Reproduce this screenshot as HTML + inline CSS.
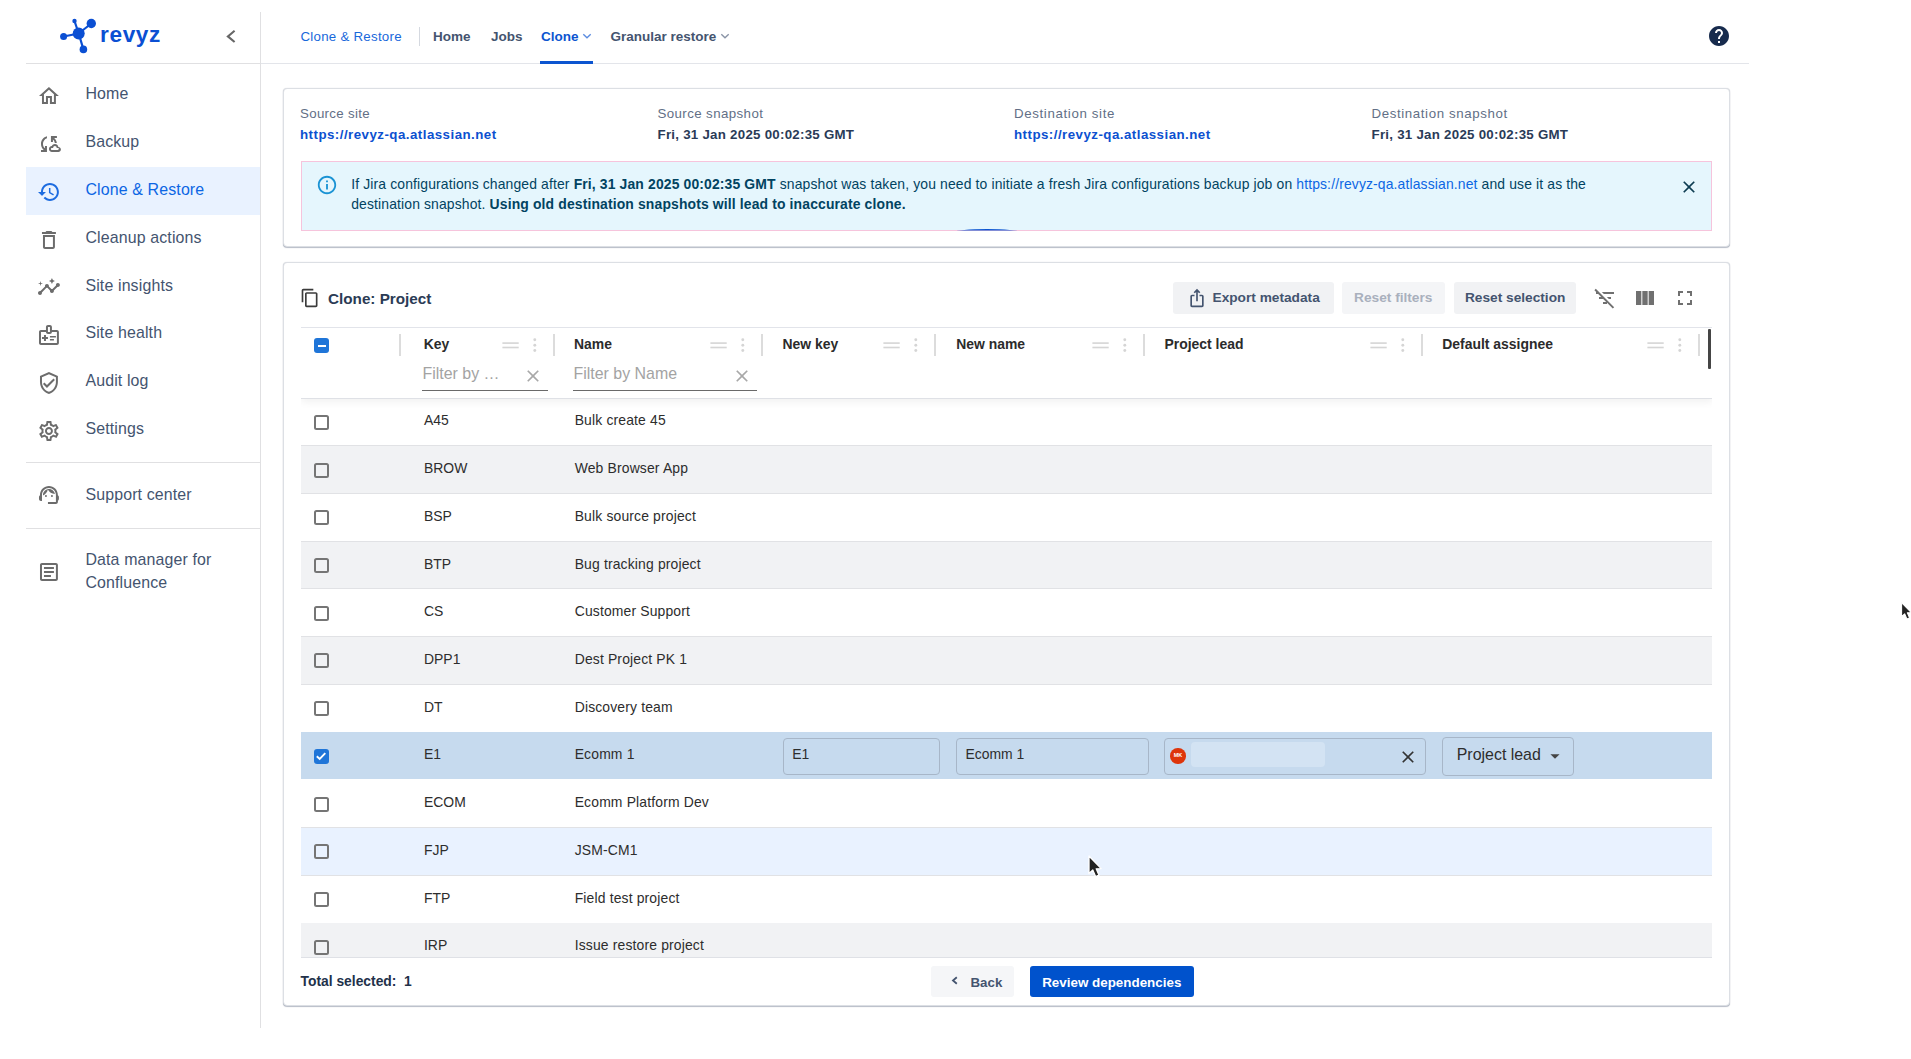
<!DOCTYPE html>
<html lang="en">
<head>
<meta charset="utf-8">
<title>Clone: Project</title>
<style>
*{box-sizing:border-box;margin:0;padding:0}
html,body{width:1911px;height:1059px;overflow:hidden;background:#fff}
body{font-family:"Liberation Sans",sans-serif;position:relative;color:#172b4d;-webkit-font-smoothing:antialiased}
svg{display:block}
a{text-decoration:none;color:inherit}
.abs{position:absolute}
/* ---------- sidebar ---------- */
#side{position:absolute;left:26px;top:12px;width:235px;height:1016px;border-right:1px solid #e0e0e2}
#side .hd{position:absolute;left:0;top:0;width:234px;height:52px;border-bottom:1px solid #e0e0e2}
#logo{position:absolute;left:33px;top:6px}
#logotxt{position:absolute;left:74px;top:9.2px;font-weight:bold;font-size:22.6px;line-height:28px;color:#0b4fd3;letter-spacing:.65px}
#collapse{position:absolute;left:195px;top:13px}
.nav{position:absolute;left:0;width:234px;height:47.77px;color:#44546f;font-size:15.93px;letter-spacing:.14px}
.nav.act{background:#e9f2ff;color:#0c66e4}
.nav svg{position:absolute;left:11px;top:12.5px;width:23.9px;height:23.9px;fill:#6c6c6c}
.nav.act svg{fill:#1d6ce0}
.nav span{position:absolute;left:59.4px;top:12.6px;line-height:20px;white-space:nowrap}
.sdiv{position:absolute;left:0;width:234px;height:1px;background:#e0e0e2}
/* ---------- top nav ---------- */
#top{position:absolute;left:261px;top:12px;width:1488px;height:52px;border-bottom:1px solid #e3e5ea}
#top span{position:absolute;white-space:nowrap;font-size:13.5px;line-height:16px;top:16.7px;color:#44546f;font-weight:bold}
#top .crumb{font-weight:normal;color:#1868db;font-size:13.3px;letter-spacing:.25px}
#top .on{color:#0c55d0}
/* ---------- cards ---------- */
.card{position:absolute;left:283px;width:1447px;background:#fff;border:1px solid #dcdfe4;border-radius:4px;box-shadow:0 1px 1px rgba(9,30,66,.28),0 0 1px rgba(9,30,66,.2)}
.lbl{position:absolute;top:17.1px;font-size:13.3px;line-height:16px;color:#626f86;white-space:nowrap}
.val{position:absolute;top:38.3px;font-size:13.3px;line-height:16px;font-weight:bold;color:#2a3b57;white-space:nowrap}
.val.lk{color:#0c50d0}
#alert{position:absolute;left:16.5px;top:72px;width:1411px;height:70px;background:#e5f6fd;border:1px solid #f6c4dc;color:#014361;font-size:13.93px;letter-spacing:.135px;line-height:19.9px}
#alert p{position:absolute;left:49.7px;top:12.6px;width:1275px}
#alert a{color:#0c66e4}
/* ---------- grid ---------- */
#title{position:absolute;left:44px;top:26px;font-weight:bold;font-size:15.25px;line-height:20px;color:#2b3b55;white-space:nowrap}
.btn{position:absolute;top:19.2px;height:32px;border-radius:3px;background:#f1f2f4;color:#44546f;font-weight:bold;font-size:13.7px;line-height:32px;white-space:nowrap;text-align:center}
.btn.dis{color:#a9b0bd;background:#f4f5f7}
#grid{position:absolute;left:16.5px;top:64px;width:1411px;height:631.3px;overflow:hidden;border-top:1px solid #e2e4ea;border-bottom:1px solid #dfe1e6}
#ghead{position:absolute;left:0;top:0;width:1412px;height:71px;border-bottom:1px solid #dfe1e6;box-shadow:0 3px 8px rgba(0,0,0,.06);z-index:2;background:#fff}
.hc{position:absolute;top:7.9px;font-weight:bold;font-size:13.93px;line-height:16px;color:#2b2b2b;white-space:nowrap}
.sep{position:absolute;top:6.2px;width:2px;height:22px;background:#dcdcdc}
.eq{position:absolute;top:14.8px;width:16.5px;height:5.8px;border-top:1.5px solid #d2d2d2;border-bottom:1.5px solid #d2d2d2}
.dots{position:absolute;top:9.1px;width:2.6px;height:15.9px;background:radial-gradient(circle,#cfcfcf 1.25px,transparent 1.5px) 0 0/2.6px 5.3px repeat-y}
.flt{position:absolute;top:35.2px;height:27.5px;border-bottom:1px solid #6a6a6a;font-size:15.93px;line-height:20px;color:#a3a3a3;white-space:nowrap;overflow:hidden}
.flt i{font-style:normal;position:absolute;left:1px;top:.8px}
.flt svg{position:absolute;right:5px;top:3px;width:20px;height:20px;fill:#a8a8a8}
.row{position:absolute;left:0;width:1412px;height:47.77px;border-bottom:1px solid #e1e2e5;font-size:13.93px;color:#2d2d2d}
.row.ev{background:#f1f2f4}
.row.sel{background:#c6daee;border-bottom-color:#c6daee}
.row.hov{background:#e9f2ff}
.row b{position:absolute;left:13px;top:16.4px;width:15px;height:15px;border:2px solid #757575;border-radius:2.5px;background:#fff}
.row.ev b{background:#f1f2f4}.row.hov b{background:#e9f2ff}
.row .k{position:absolute;left:123.5px;top:13px;line-height:18px;white-space:nowrap}
.row .n{position:absolute;left:274.2px;top:13px;line-height:18px;white-space:nowrap;letter-spacing:.15px}
.inp{position:absolute;top:6.2px;height:36.3px;border:1px solid #a7b6c8;border-radius:4px;font-size:13.93px;line-height:18px;color:#2d2d2d;padding:6px 0 0 8.5px;white-space:nowrap}
#foot{position:absolute;left:16.5px;top:710px;font-weight:bold;font-size:13.85px;line-height:16px;color:#22314a;white-space:pre}
</style>
</head>
<body>
<div id="side">
 <div class="hd">
  <svg id="logo" class="abs" style="left:30px;top:2px" width="44" height="44" viewBox="0 0 44 44">
   <g stroke="#0b4fd3" stroke-width="2.2" stroke-linecap="round">
    <line x1="22.7" y1="19.5" x2="35.3" y2="9.5"/><line x1="22.7" y1="19.5" x2="7.6" y2="22.5"/>
    <line x1="22.7" y1="19.5" x2="27.4" y2="35.4"/><line x1="22.7" y1="19.5" x2="18.5" y2="7"/>
   </g>
   <g fill="#0b4fd3"><circle cx="22.7" cy="19.5" r="6"/><circle cx="35.3" cy="9.5" r="4.7"/><circle cx="7.6" cy="22.5" r="3.5"/><circle cx="27.4" cy="35.4" r="3.8"/><circle cx="18.5" cy="7" r="2.2"/></g>
  </svg>
  <div id="logotxt">revyz</div>
  <svg class="abs" style="left:198px;top:16px" width="16" height="18" viewBox="0 0 16 18"><path d="M10.6 2.8 L3.9 8.4 L10.6 14" fill="none" stroke="#666" stroke-width="2.1"/></svg>
 </div>
 <div class="nav" style="top:59.90px"><svg viewBox="0 0 24 24"><path d="M12 5.69l5 4.5V18h-2v-6H9v6H7v-7.81l5-4.5M12 3L2 12h3v8h6v-6h2v6h6v-8h3L12 3z"/></svg><span>Home</span></div>
 <div class="nav" style="top:107.67px"><svg viewBox="0 0 24 24"><path d="M21.5 14.98c-.02 0-.03 0-.05.01C21.2 13.3 19.76 12 18 12c-1.4 0-2.6.83-3.16 2.02C13.26 14.1 12 15.4 12 17c0 1.66 1.34 3 3 3l6.5-.02c1.38 0 2.5-1.12 2.5-2.5s-1.12-2.5-2.5-2.5zm.01 3.02L15 18c-.55 0-1-.45-1-1s.45-1 1-1h1.25v-.25c0-.97.78-1.75 1.75-1.75s1.750.78 1.750 1.750V16h1.760c.28 0 .5.22.5.5-.01.27-.23.5-.5.5zM10 4.260v2.090C7.670 7.180 6 9.390 6 12c0 1.770.78 3.340 2 4.440V14h2v6H4v-2h2.730C5.060 16.540 4 14.400 4 12c0-3.730 2.550-6.850 6-7.740zM20 6h-2.730c1.430 1.260 2.410 3.010 2.660 5h-2.020c-.23-1.360-.93-2.550-1.910-3.440V10h-2V4h6v2z"/></svg><span>Backup</span></div>
 <div class="nav act" style="top:155.44px"><svg viewBox="0 0 24 24"><path d="M13 3c-4.970 0-9 4.030-9 9H1l3.890 3.890.07.14L9 12H6c0-3.870 3.130-7 7-7s7 3.130 7 7-3.130 7-7 7c-1.930 0-3.680-.79-4.940-2.060l-1.420 1.420C8.270 19.990 10.510 21 13 21c4.970 0 9-4.030 9-9s-4.030-9-9-9zm-1 5v5l4.280 2.540.72-1.210-3.500-2.080V8H12z"/></svg><span>Clone &amp; Restore</span></div>
 <div class="nav" style="top:203.21px"><svg viewBox="0 0 24 24"><path d="M6 19c0 1.100.9 2 2 2h8c1.100 0 2-.9 2-2V7H6v12zM8 9h8v10H8V9zm7.500-5l-1-1h-5l-1 1H5v2h14V4z"/></svg><span>Cleanup actions</span></div>
 <div class="nav" style="top:250.98px"><svg viewBox="0 0 24 24"><path d="M21 8c-1.450 0-2.260 1.440-1.930 2.510l-3.550 3.560c-.3-.09-.74-.09-1.040 0l-2.550-2.550C12.270 10.450 11.460 9 10 9c-1.450 0-2.270 1.440-1.930 2.520l-4.560 4.550C2.440 15.740 1 16.550 1 18c0 1.100.9 2 2 2 1.450 0 2.260-1.440 1.930-2.510l4.550-4.560c.3.09.74.09 1.040 0l2.550 2.550C12.730 16.550 13.540 18 15 18c1.450 0 2.270-1.440 1.930-2.520l3.560-3.550c1.070.33 2.510-.48 2.510-1.930 0-1.100-.9-2-2-2z"/><path d="M15 9l.94-2.070L18 6l-2.060-.93L15 3l-.92 2.070L12 6l2.080.93zM3.500 11L4 9l2-.5L4 8l-.5-2L3 8l-2 .5L3 9z"/></svg><span>Site insights</span></div>
 <div class="nav" style="top:298.75px"><svg viewBox="0 0 24 24"><path d="M20 7h-5V4c0-1.100-.9-2-2-2h-2c-1.100 0-2 .9-2 2v3H4c-1.100 0-2 .9-2 2v11c0 1.100.9 2 2 2h16c1.100 0 2-.9 2-2V9c0-1.100-.9-2-2-2zm-9-3h2v5h-2V4zm9 16H4V9h5c0 1.100.9 2 2 2h2c1.100 0 2-.9 2-2h5v11zm-9-4H9v2H7v-2H5v-2h2v-2h2v2h2v2zm2-1.500V13h6v1.500h-6zm0 3V16h4v1.500h-4z"/></svg><span>Site health</span></div>
 <div class="nav" style="top:346.52px"><svg viewBox="0 0 24 24"><path d="M12 1L3 5v6c0 5.550 3.840 10.740 9 12 5.160-1.260 9-6.450 9-12V5l-9-4zm7 10c0 4.520-2.980 8.690-7 9.930-4.020-1.240-7-5.410-7-9.930V6.300l7-3.110 7 3.110V11zm-11.590.59L6 13l4 4 8-8-1.410-1.420L10 14.170z"/></svg><span>Audit log</span></div>
 <div class="nav" style="top:394.29px"><svg viewBox="0 0 24 24"><path d="M19.430 12.980c.04-.32.07-.64.07-.98 0-.34-.03-.66-.07-.98l2.110-1.650c.19-.15.24-.42.12-.64l-2-3.460c-.09-.16-.26-.25-.44-.25-.06 0-.12.01-.17.03l-2.490 1c-.52-.4-1.080-.73-1.690-.98l-.38-2.650C14.460 2.180 14.250 2 14 2h-4c-.25 0-.46.18-.49.42l-.38 2.650c-.61.25-1.170.59-1.690.98l-2.490-1c-.06-.02-.12-.03-.18-.03-.17 0-.34.09-.43.25l-2 3.460c-.13.22-.07.49.12.64l2.110 1.650c-.04.32-.07.65-.07.98 0 .33.03.66.07.98l-2.110 1.650c-.19.15-.24.42-.12.64l2 3.460c.09.16.26.25.44.25.06 0 .12-.01.17-.03l2.490-1c.52.4 1.080.73 1.690.98l.38 2.650c.03.24.24.42.49.42h4c.25 0 .46-.18.49-.42l.38-2.650c.61-.25 1.170-.59 1.690-.98l2.490 1c.06.02.12.03.18.03.17 0 .34-.09.43-.25l2-3.460c.12-.22.07-.49-.12-.64l-2.110-1.650zm-1.980-1.710c.04.31.05.52.05.73 0 .21-.02.43-.05.73l-.14 1.130.89.7 1.080.84-.7 1.210-1.270-.51-1.040-.42-.9.68c-.43.32-.84.56-1.250.73l-1.060.43-.16 1.130-.2 1.350h-1.400l-.19-1.350-.16-1.130-1.060-.43c-.43-.18-.83-.41-1.230-.71l-.91-.7-1.060.43-1.270.51-.7-1.210 1.080-.84.89-.7-.14-1.130c-.03-.31-.05-.54-.05-.74s.02-.43.05-.73l.14-1.130-.89-.7-1.080-.84.7-1.210 1.270.51 1.040.42.9-.68c.43-.32.84-.56 1.250-.73l1.060-.43.16-1.130.2-1.350h1.390l.19 1.350.16 1.130 1.060.43c.43.18.83.41 1.230.71l.91.7 1.060-.43 1.270-.51.7 1.210-1.070.85-.89.7.14 1.130zM12 8c-2.210 0-4 1.790-4 4s1.790 4 4 4 4-1.790 4-4-1.790-4-4-4zm0 6c-1.100 0-2-.9-2-2s.9-2 2-2 2 .9 2 2-.9 2-2 2z"/></svg><span>Settings</span></div>
 <div class="sdiv" style="top:450px"></div>
 <div class="nav" style="top:459.6px"><svg viewBox="0 0 24 24" style="top:11.700px"><path d="M21 12.220C21 6.730 16.740 3 12 3c-4.690 0-9 3.650-9 9.280-.6.340-1 .98-1 1.720v2c0 1.100.9 2 2 2h1v-6.100c0-3.870 3.130-7 7-7s7 3.130 7 7V19h-8v2h8c1.100 0 2-.9 2-2v-1.220c.59-.31 1-.92 1-1.640v-2.300c0-.7-.41-1.310-1-1.620z"/><circle cx="9" cy="13" r="1"/><circle cx="15" cy="13" r="1"/><path d="M18 11.030C17.520 8.180 15.040 6 12.050 6c-3.030 0-6.290 2.510-6.030 6.450 2.470-1.010 4.330-3.210 4.860-5.890 1.310 2.630 4 4.440 7.120 4.470z"/></svg><span style="top:13.600px">Support center</span></div>
 <div class="sdiv" style="top:516px"></div>
 <div class="nav" style="top:524px;height:71.6px"><svg viewBox="0 0 24 24" style="top:23.8px"><path d="M19 5v14H5V5h14m0-2H5c-1.100 0-2 .9-2 2v14c0 1.100.9 2 2 2h14c1.100 0 2-.9 2-2V5c0-1.100-.9-2-2-2z"/><path d="M14 17H7v-2h7v2zm3-4H7v-2h10v2zm0-4H7V7h10v2z"/></svg><span style="top:11.7px;line-height:23.5px;white-space:normal;width:160px">Data manager for Confluence</span></div>
</div>

<div id="top">
 <span class="crumb" style="left:39.5px">Clone &amp; Restore</span>
 <i class="abs" style="left:157.5px;top:15px;width:1px;height:19px;background:#d5d9e0"></i>
 <span style="left:172px">Home</span>
 <span style="left:230px">Jobs</span>
 <span class="on" style="left:280px">Clone</span>
 <svg class="abs" style="left:321px;top:20px" width="10" height="8" viewBox="0 0 10 8"><path d="M1.300 2.200 L5 5.700 L8.700 2.200" fill="none" stroke="#5d8de0" stroke-width="1.400"/></svg>
 <i class="abs" style="left:278.5px;top:48.5px;width:53.500px;height:3.500px;background:#0c55d0"></i>
 <span style="left:349.5px">Granular restore</span>
 <svg class="abs" style="left:459px;top:20px" width="10" height="8" viewBox="0 0 10 8"><path d="M1.300 2.200 L5 5.700 L8.700 2.200" fill="none" stroke="#8a94a6" stroke-width="1.400"/></svg>
 <svg class="abs" style="left:1445.500px;top:12px" width="24" height="24" viewBox="0 0 24 24"><path fill="#172b4d" d="M12 2C6.480 2 2 6.480 2 12s4.480 10 10 10 10-4.480 10-10S17.520 2 12 2zm1 17h-2v-2h2v2zm2.070-7.750l-.9.920C13.450 12.900 13 13.500 13 15h-2v-.5c0-1.100.45-2.100 1.170-2.830l1.240-1.260c.37-.36.59-.86.59-1.410 0-1.100-.9-2-2-2s-2 .9-2 2H8c0-2.210 1.790-4 4-4s4 1.790 4 4c0 .88-.36 1.680-.93 2.250z"/></svg>
</div>

<div class="card" style="top:88px;height:159px">
 <div class="lbl" style="left:16px;letter-spacing:.32px">Source site</div>
 <div class="val lk" style="left:16px;letter-spacing:.47px">https://revyz-qa.atlassian.net</div>
 <div class="lbl" style="left:373.5px;letter-spacing:.4px">Source snapshot</div>
 <div class="val" style="left:373.5px;letter-spacing:.26px">Fri, 31 Jan 2025 00:02:35 GMT</div>
 <div class="lbl" style="left:730px;letter-spacing:.63px">Destination site</div>
 <div class="val lk" style="left:730px;letter-spacing:.47px">https://revyz-qa.atlassian.net</div>
 <div class="lbl" style="left:1087.5px;letter-spacing:.6px">Destination snapshot</div>
 <div class="val" style="left:1087.5px;letter-spacing:.26px">Fri, 31 Jan 2025 00:02:35 GMT</div>
 <div id="alert">
  <svg class="abs" style="left:14.700px;top:11.600px" width="22" height="22" viewBox="0 0 24 24"><path fill="#1a93d4" d="M11 7h2v2h-2zm0 4h2v6h-2zm1-9C6.480 2 2 6.480 2 12s4.480 10 10 10 10-4.480 10-10S17.520 2 12 2zm0 18c-4.410 0-8-3.590-8-8s3.590-8 8-8 8 3.590 8 8-3.590 8-8 8z"/></svg>
  <p>If Jira configurations changed after <b>Fri, 31 Jan 2025 00:02:35 GMT</b> snapshot was taken, you need to initiate a fresh Jira configurations backup job on <a>https://revyz-qa.atlassian.net</a> and use it as the destination snapshot. <b>Using old destination snapshots will lead to inaccurate clone.</b></p>
  <svg class="abs" style="left:1377px;top:14.500px" width="20" height="20" viewBox="0 0 24 24"><path fill="#0d3c52" d="M19 6.410L17.590 5 12 10.590 6.410 5 5 6.410 10.590 12 5 17.590 6.410 19 12 13.410 17.590 19 19 17.590 13.410 12z"/></svg>
  <i class="abs" style="left:653px;top:67px;width:64px;height:6px;border-radius:50%;background:#0c55d0;clip-path:inset(0 0 4.500px 0)"></i>
 </div>
</div>

<div class="card" style="top:262px;height:744px">
 <svg class="abs" style="left:15.800px;top:24.700px" width="20" height="20" viewBox="0 0 24 24"><path fill="#3b3b3b" d="M16 1H4c-1.100 0-2 .9-2 2v14h2V3h12V1zm3 4H8c-1.100 0-2 .9-2 2v14c0 1.100.9 2 2 2h11c1.100 0 2-.9 2-2V7c0-1.100-.9-2-2-2zm0 16H8V7h11v14z"/></svg>
 <div id="title">Clone: Project</div>
 <div class="btn" style="left:888.5px;width:161.2px"><svg class="abs" style="left:14.500px;top:5px" width="20" height="22" viewBox="0 0 24 24"><path fill="#44546f" d="M16 5l-1.420 1.420-1.590-1.590V16h-1.980V4.830L9.420 6.420 8 5l4-4 4 4zm4 5v11c0 1.100-.9 2-2 2H6c-1.110 0-2-.9-2-2V10c0-1.110.89-2 2-2h3v2H6v11h12V10h-3V8h3c1.100 0 2 .9 2 2z"/></svg><span style="position:absolute;left:40px;top:0">Export metadata</span></div>
 <div class="btn dis" style="left:1057.5px;width:103.5px">Reset filters</div>
 <div class="btn" style="left:1170.1px;width:122.2px">Reset selection</div>
 <svg class="abs" style="left:1309.300px;top:23.300px" width="24" height="24" viewBox="0 0 24 24"><path fill="#707070" d="M10.830 8H21V6H8.830l2 2zm5 5H18v-2h-4.170l2 2zM14 16.830V18h-4v-2h3.170l-3-3H6v-2h2.170l-3-3H3V6h.17L1.390 4.220 2.800 2.810l18.380 18.380-1.410 1.410L14 16.830z"/></svg>
 <svg class="abs" style="left:1349.300px;top:23.300px" width="24" height="24" viewBox="0 0 24 24"><path fill="#707070" d="M14.670 5v14H9.330V5h5.340zm1 14H21V5h-5.330v14zm-7.340 0V5H3v14h5.330z"/></svg>
 <svg class="abs" style="left:1388.600px;top:23.300px" width="24" height="24" viewBox="0 0 24 24"><path fill="#707070" d="M7 14H5v5h5v-2H7v-3zm-2-4h2V7h3V5H5v5zm12 7h-3v2h5v-5h-2v3zM14 5v2h3v3h2V5h-5z"/></svg>
 <div id="grid">
  <div id="ghead">
   <i class="abs" style="left:13px;top:9.750px;width:15.250px;height:15.250px;border-radius:3px;background:#1f75d8"></i><i class="abs" style="left:17px;top:16.500px;width:8.600px;height:2px;background:#fff"></i>
   <span class="hc" style="left:123.3px">Key</span><svg class="abs" style="left:200.25px;top:8px" width="40" height="20" viewBox="0 0 40 20"><g fill="#d5d5d5"><rect x="1.400" y="6.300" width="16.300" height="1.600"/><rect x="1.400" y="10.700" width="16.300" height="1.600"/><circle cx="33.800" cy="3.800" r="1.450"/><circle cx="33.800" cy="9.200" r="1.450"/><circle cx="33.800" cy="14.500" r="1.450"/></g></svg>
   <span class="hc" style="left:273.5px">Name</span><svg class="abs" style="left:408.00px;top:8px" width="40" height="20" viewBox="0 0 40 20"><g fill="#d5d5d5"><rect x="1.400" y="6.300" width="16.300" height="1.600"/><rect x="1.400" y="10.700" width="16.300" height="1.600"/><circle cx="33.800" cy="3.800" r="1.450"/><circle cx="33.800" cy="9.200" r="1.450"/><circle cx="33.800" cy="14.500" r="1.450"/></g></svg>
   <span class="hc" style="left:482px">New key</span><svg class="abs" style="left:581.25px;top:8px" width="40" height="20" viewBox="0 0 40 20"><g fill="#d5d5d5"><rect x="1.400" y="6.300" width="16.300" height="1.600"/><rect x="1.400" y="10.700" width="16.300" height="1.600"/><circle cx="33.800" cy="3.800" r="1.450"/><circle cx="33.800" cy="9.200" r="1.450"/><circle cx="33.800" cy="14.500" r="1.450"/></g></svg>
   <span class="hc" style="left:655.75px">New name</span><svg class="abs" style="left:790.00px;top:8px" width="40" height="20" viewBox="0 0 40 20"><g fill="#d5d5d5"><rect x="1.400" y="6.300" width="16.300" height="1.600"/><rect x="1.400" y="10.700" width="16.300" height="1.600"/><circle cx="33.800" cy="3.800" r="1.450"/><circle cx="33.800" cy="9.200" r="1.450"/><circle cx="33.800" cy="14.500" r="1.450"/></g></svg>
   <span class="hc" style="left:864px">Project lead</span><svg class="abs" style="left:1068.00px;top:8px" width="40" height="20" viewBox="0 0 40 20"><g fill="#d5d5d5"><rect x="1.400" y="6.300" width="16.300" height="1.600"/><rect x="1.400" y="10.700" width="16.300" height="1.600"/><circle cx="33.800" cy="3.800" r="1.450"/><circle cx="33.800" cy="9.200" r="1.450"/><circle cx="33.800" cy="14.500" r="1.450"/></g></svg>
   <span class="hc" style="left:1141.8px">Default assignee</span><svg class="abs" style="left:1345.00px;top:8px" width="40" height="20" viewBox="0 0 40 20"><g fill="#d5d5d5"><rect x="1.400" y="6.300" width="16.300" height="1.600"/><rect x="1.400" y="10.700" width="16.300" height="1.600"/><circle cx="33.800" cy="3.800" r="1.450"/><circle cx="33.800" cy="9.200" r="1.450"/><circle cx="33.800" cy="14.500" r="1.450"/></g></svg>
   <i class="sep" style="left:98.00px"></i>
   <i class="sep" style="left:252.25px"></i>
   <i class="sep" style="left:460.00px"></i>
   <i class="sep" style="left:633.25px"></i>
   <i class="sep" style="left:842.00px"></i>
   <i class="sep" style="left:1120.00px"></i>
   <i class="sep" style="left:1397.00px"></i>
   <div class="flt" style="left:121px;width:126.250px"><i>Filter by …</i><svg viewBox="0 0 24 24"><path d="M19 6.410L17.590 5 12 10.590 6.410 5 5 6.410 10.590 12 5 17.590 6.410 19 12 13.410 17.590 19 19 17.590 13.410 12z"/></svg></div>
   <div class="flt" style="left:272px;width:184.400px"><i>Filter by Name</i><svg viewBox="0 0 24 24"><path d="M19 6.410L17.590 5 12 10.590 6.410 5 5 6.410 10.590 12 5 17.590 6.410 19 12 13.410 17.590 19 19 17.590 13.410 12z"/></svg></div>
   <i class="abs" style="left:1407px;top:1.300px;width:3px;height:40px;background:#454545;border-radius:1px"></i>
  </div>
  <div class="row" style="top:70.45px"><b></b><span class="k">A45</span><span class="n">Bulk create 45</span></div>
  <div class="row ev" style="top:118.18px"><b></b><span class="k">BROW</span><span class="n">Web Browser App</span></div>
  <div class="row" style="top:165.91px"><b></b><span class="k">BSP</span><span class="n">Bulk source project</span></div>
  <div class="row ev" style="top:213.64px"><b></b><span class="k">BTP</span><span class="n">Bug tracking project</span></div>
  <div class="row" style="top:261.37px"><b></b><span class="k">CS</span><span class="n">Customer Support</span></div>
  <div class="row ev" style="top:309.10px"><b></b><span class="k">DPP1</span><span class="n">Dest Project PK 1</span></div>
  <div class="row" style="top:356.83px"><b></b><span class="k">DT</span><span class="n">Discovery team</span></div>
  <div class="row sel" style="top:404.2px;height:47.2px"><i class="abs" style="left:13.200px;top:16.400px;width:15px;height:15px;border-radius:3px;background:#1f75d8"></i><svg class="abs" style="left:14.700px;top:18px" width="12" height="12" viewBox="0 0 12 12"><path d="M1.800 6.200 L4.700 9 L10.300 3.200" fill="none" stroke="#fff" stroke-width="1.900"/></svg><span class="k">E1</span><span class="n">Ecomm 1</span>
   <div class="inp" style="left:482.250px;width:157.500px">E1</div>
   <div class="inp" style="left:655.500px;width:192.500px">Ecomm 1</div>
   <div class="inp" style="left:863.250px;width:261.750px"><i class="abs" style="left:5.500px;top:9px;width:15.500px;height:15.500px;border-radius:50%;background:#de350b;color:#fff;font:bold 5.500px/15.500px 'Liberation Sans',sans-serif;text-align:center;font-style:normal">MK</i><i class="abs" style="left:26.500px;top:2.200px;width:133.500px;height:25.500px;border-radius:4px;background:#d3e3f3"></i><svg class="abs" style="left:233px;top:7.500px" width="20" height="20" viewBox="0 0 24 24"><path fill="#333" d="M19 6.410L17.590 5 12 10.590 6.410 5 5 6.410 10.590 12 5 17.590 6.410 19 12 13.410 17.590 19 19 17.590 13.410 12z"/></svg></div>
   <div class="inp" style="left:1141.250px;width:131.750px;top:5.200px;height:38.500px;font-size:15.930px;padding:8px 0 0 14px">Project lead<svg class="abs" style="left:101.200px;top:7px" width="22" height="22" viewBox="0 0 24 24"><path fill="#444" d="M7 10l5 5 5-5z"/></svg></div>
  </div>
  <div class="row" style="top:452.29px"><b></b><span class="k">ECOM</span><span class="n">Ecomm Platform Dev</span></div>
  <div class="row hov" style="top:500.02px"><b></b><span class="k">FJP</span><span class="n">JSM-CM1</span></div>
  <div class="row" style="top:547.75px"><b></b><span class="k">FTP</span><span class="n">Field test project</span></div>
  <div class="row ev" style="top:595.48px"><b></b><span class="k">IRP</span><span class="n">Issue restore project</span></div>
 </div>
 <div id="foot">Total selected:  1</div>
 <div class="btn" style="left:646.5px;top:703px;width:83px;height:30.8px;line-height:33.2px;background:#f5f6f8"><svg class="abs" style="left:19px;top:9.300px" width="10" height="12" viewBox="0 0 10 12"><path d="M6.800 2.200 L3 5.500 L6.800 8.800" fill="none" stroke="#44546f" stroke-width="1.800"/></svg><span style="position:absolute;left:40px;top:0;font-size:13.300px">Back</span></div>
 <div class="btn" style="left:746px;top:703px;width:163.5px;height:30.8px;line-height:33.2px;background:#0052cc;color:#fff;font-size:13.400px">Review dependencies</div>
</div>
<svg class="abs" style="left:1087.2px;top:853.9px;z-index:9" width="18" height="26" viewBox="-2 -2 18 26"><path d="M0 0 L0 17.500 L3.800 14 L6.600 20.600 L10 19.200 L7.200 12.800 L12.200 12.600 Z" fill="#222" stroke="#fff" stroke-width="1.300" stroke-linejoin="round"/></svg>
<svg class="abs" style="left:1900.3px;top:601.1px;z-index:9" width="14.400" height="20.800" viewBox="-2 -2 18 26"><path d="M0 0 L0 17.500 L3.800 14 L6.600 20.600 L10 19.200 L7.200 12.800 L12.200 12.600 Z" fill="#222" stroke="#fff" stroke-width="1.300" stroke-linejoin="round"/></svg>
</body>
</html>
